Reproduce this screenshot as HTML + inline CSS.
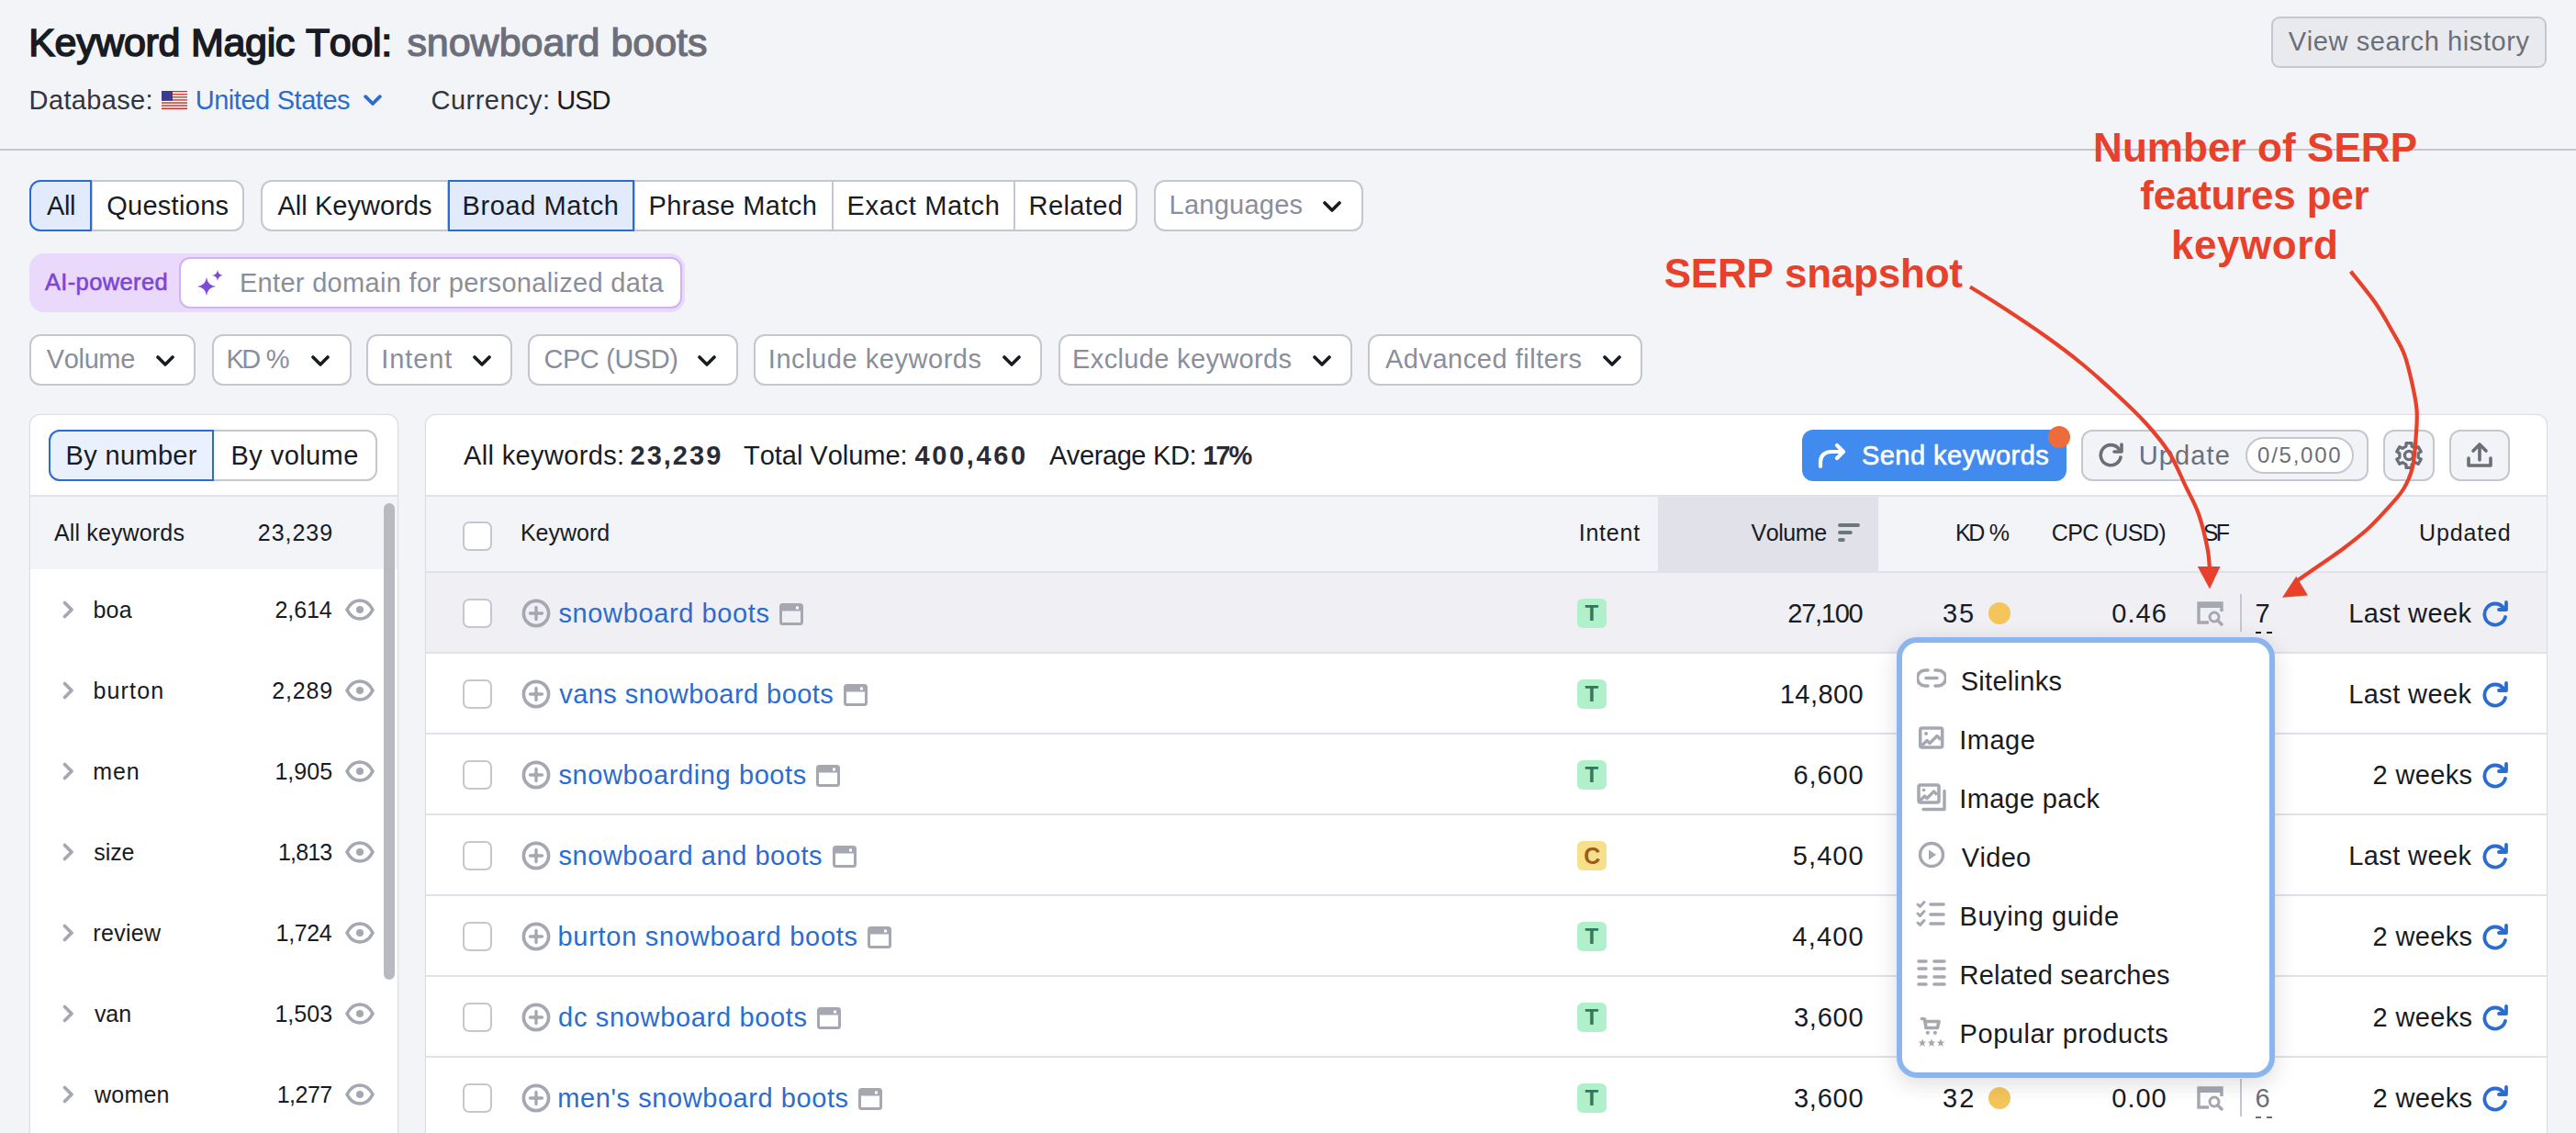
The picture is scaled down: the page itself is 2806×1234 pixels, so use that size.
<!DOCTYPE html><html><head><meta charset="utf-8"><style>
html,body{margin:0;padding:0;width:2806px;height:1234px;overflow:hidden;background:#f3f4f8;}
.t{position:absolute;white-space:pre;font-family:"Liberation Sans",sans-serif;font-kerning:none;font-variant-ligatures:none;}
.b{position:absolute;box-sizing:border-box;}
</style></head><body>
<div class="t" style="left:31.27px;top:22px;font-size:43px;line-height:48px;color:#191b23;letter-spacing:-0.352px;word-spacing:0.352px;-webkit-text-stroke:1.6px #191b23;">Keyword Magic Tool:</div>
<div class="t" style="left:443.40px;top:22px;font-size:43px;line-height:48px;color:#6c6e79;letter-spacing:-0.034px;word-spacing:0.034px;-webkit-text-stroke:1.2px #6c6e79;">snowboard boots</div>
<div class="t" style="left:31.62px;top:93px;font-size:29px;line-height:32px;color:#33353d;letter-spacing:0.353px;">Database:</div>
<svg class="b" style="left:176px;top:99px;" width="28" height="20" viewBox="0 0 28 20"><rect x="0" y="0.000" width="28" height="1.558" fill="#d22f27"/><rect x="0" y="1.538" width="28" height="1.558" fill="#fff"/><rect x="0" y="3.077" width="28" height="1.558" fill="#d22f27"/><rect x="0" y="4.615" width="28" height="1.558" fill="#fff"/><rect x="0" y="6.154" width="28" height="1.558" fill="#d22f27"/><rect x="0" y="7.692" width="28" height="1.558" fill="#fff"/><rect x="0" y="9.231" width="28" height="1.558" fill="#d22f27"/><rect x="0" y="10.769" width="28" height="1.558" fill="#fff"/><rect x="0" y="12.308" width="28" height="1.558" fill="#d22f27"/><rect x="0" y="13.846" width="28" height="1.558" fill="#fff"/><rect x="0" y="15.385" width="28" height="1.558" fill="#d22f27"/><rect x="0" y="16.923" width="28" height="1.558" fill="#fff"/><rect x="0" y="18.462" width="28" height="1.558" fill="#d22f27"/><rect x="0" y="0" width="12" height="10.77" fill="#3c3b8f"/></svg>
<div class="t" style="left:212.76px;top:93px;font-size:29px;line-height:32px;color:#2b6cd0;letter-spacing:-0.483px;word-spacing:0.483px;">United States</div>
<svg class="b" style="left:396px;top:103px;" width="20" height="14" viewBox="0 0 20 14"><path d="M2.2 2.2 L10 10 L17.8 2.2" fill="none" stroke="#2b6cd0" stroke-width="3.8" stroke-linecap="round" stroke-linejoin="round"/></svg>
<div class="t" style="left:469.53px;top:93px;font-size:29px;line-height:32px;color:#33353d;letter-spacing:0.490px;">Currency:</div>
<div class="t" style="left:606.26px;top:93px;font-size:29px;line-height:32px;color:#191b23;letter-spacing:-1.052px;">USD</div>
<div class="b" style="left:2474px;top:18px;width:300px;height:56px;background:#e9eaee;border:2px solid #c4c7cf;border-radius:9px;"></div>
<div class="t" style="left:2492.87px;top:29px;font-size:29px;line-height:32px;color:#6c6e79;letter-spacing:0.598px;">View search history</div>
<div class="b" style="left:0px;top:162px;width:2806px;height:2px;background:#c4c7cf;"></div>
<div class="b" style="left:32px;top:196px;width:234px;height:56px;background:#fff;border:2px solid #c4c7cf;border-radius:12px;"></div>
<div class="b" style="left:99px;top:196px;width:2px;height:56px;background:#c4c7cf;"></div>
<div class="b" style="left:32px;top:196px;width:68px;height:56px;background:#e1ebfb;border:2px solid #2b6cd0;border-radius:12px 0 0 12px;"></div>
<div class="t" style="left:50.94px;top:208px;font-size:29px;line-height:32px;color:#191b23;letter-spacing:-0.366px;">All</div>
<div class="t" style="left:116.13px;top:208px;font-size:29px;line-height:32px;color:#191b23;letter-spacing:0.294px;">Questions</div>
<div class="b" style="left:284px;top:196px;width:955px;height:56px;background:#fff;border:2px solid #c4c7cf;border-radius:12px;"></div>
<div class="b" style="left:487px;top:196px;width:2px;height:56px;background:#c4c7cf;"></div>
<div class="b" style="left:690px;top:196px;width:2px;height:56px;background:#c4c7cf;"></div>
<div class="b" style="left:906px;top:196px;width:2px;height:56px;background:#c4c7cf;"></div>
<div class="b" style="left:1104px;top:196px;width:2px;height:56px;background:#c4c7cf;"></div>
<div class="b" style="left:488px;top:196px;width:203px;height:56px;background:#e1ebfb;border:2px solid #2b6cd0;border-radius:0 0 0 0;"></div>
<div class="t" style="left:302.44px;top:208px;font-size:29px;line-height:32px;color:#191b23;letter-spacing:0.045px;">All Keywords</div>
<div class="t" style="left:503.62px;top:208px;font-size:29px;line-height:32px;color:#191b23;letter-spacing:0.585px;">Broad Match</div>
<div class="t" style="left:706.62px;top:208px;font-size:29px;line-height:32px;color:#191b23;letter-spacing:0.395px;">Phrase Match</div>
<div class="t" style="left:922.62px;top:208px;font-size:29px;line-height:32px;color:#191b23;letter-spacing:0.671px;">Exact Match</div>
<div class="t" style="left:1120.62px;top:208px;font-size:29px;line-height:32px;color:#191b23;letter-spacing:0.382px;">Related</div>
<div class="b" style="left:1257px;top:196px;width:228px;height:56px;background:#fff;border:2px solid #c4c7cf;border-radius:12px;"></div>
<div class="t" style="left:1273.62px;top:207px;font-size:29px;line-height:32px;color:#8a8e9b;letter-spacing:0.237px;">Languages</div>
<svg class="b" style="left:1441px;top:219px;" width="20" height="13" viewBox="0 0 20 13"><path d="M2 2 L10.0 10 L18 2" fill="none" stroke="#191b23" stroke-width="3.6" stroke-linecap="round" stroke-linejoin="round"/></svg>
<div class="b" style="left:32px;top:276px;width:714px;height:64px;background:#ead9fb;border-radius:16px;"></div>
<div class="b" style="left:195px;top:280px;width:548px;height:56px;background:#fff;border:2px solid #d0b2f6;border-radius:12px;"></div>
<div class="t" style="left:48.95px;top:293px;font-size:25.5px;line-height:28px;color:#7c46d4;letter-spacing:0.366px;-webkit-text-stroke:0.6px #7c46d4;">AI-powered</div>
<svg class="b" style="left:210px;top:290px;" width="36" height="36" viewBox="0 0 36 36"><path d="M15 11.8 Q16.0 21.0 25.2 22 Q16.0 23.0 15 32.2 Q14.0 23.0 4.800000000000001 22 Q14.0 21.0 15 11.8 Z" fill="#7c4cd8"/><path d="M27 4.1 Q27.6 9.4 32.9 10 Q27.6 10.6 27 15.9 Q26.4 10.6 21.1 10 Q26.4 9.4 27 4.1 Z" fill="#7c4cd8"/></svg>
<div class="t" style="left:260.92px;top:292px;font-size:29px;line-height:32px;color:#8a8e9b;letter-spacing:0.315px;">Enter domain for personalized data</div>
<div class="b" style="left:32px;top:364px;width:181px;height:56px;background:#fff;border:2px solid #c4c7cf;border-radius:12px;"></div>
<div class="t" style="left:50.87px;top:375px;font-size:29px;line-height:32px;color:#8a8e9b;letter-spacing:-0.382px;">Volume</div>
<svg class="b" style="left:170px;top:387px;" width="20" height="13" viewBox="0 0 20 13"><path d="M2 2 L10.0 10 L18 2" fill="none" stroke="#191b23" stroke-width="3.6" stroke-linecap="round" stroke-linejoin="round"/></svg>
<div class="b" style="left:231px;top:364px;width:152px;height:56px;background:#fff;border:2px solid #c4c7cf;border-radius:12px;"></div>
<div class="t" style="left:246.62px;top:375px;font-size:29px;line-height:32px;color:#8a8e9b;letter-spacing:-2.608px;word-spacing:2.608px;">KD %</div>
<svg class="b" style="left:339px;top:387px;" width="20" height="13" viewBox="0 0 20 13"><path d="M2 2 L10.0 10 L18 2" fill="none" stroke="#191b23" stroke-width="3.6" stroke-linecap="round" stroke-linejoin="round"/></svg>
<div class="b" style="left:399px;top:364px;width:159px;height:56px;background:#fff;border:2px solid #c4c7cf;border-radius:12px;"></div>
<div class="t" style="left:415.32px;top:375px;font-size:29px;line-height:32px;color:#8a8e9b;letter-spacing:0.866px;">Intent</div>
<svg class="b" style="left:515px;top:387px;" width="20" height="13" viewBox="0 0 20 13"><path d="M2 2 L10.0 10 L18 2" fill="none" stroke="#191b23" stroke-width="3.6" stroke-linecap="round" stroke-linejoin="round"/></svg>
<div class="b" style="left:575px;top:364px;width:229px;height:56px;background:#fff;border:2px solid #c4c7cf;border-radius:12px;"></div>
<div class="t" style="left:592.53px;top:375px;font-size:29px;line-height:32px;color:#8a8e9b;letter-spacing:-0.508px;word-spacing:0.508px;">CPC (USD)</div>
<svg class="b" style="left:760px;top:387px;" width="20" height="13" viewBox="0 0 20 13"><path d="M2 2 L10.0 10 L18 2" fill="none" stroke="#191b23" stroke-width="3.6" stroke-linecap="round" stroke-linejoin="round"/></svg>
<div class="b" style="left:821px;top:364px;width:314px;height:56px;background:#fff;border:2px solid #c4c7cf;border-radius:12px;"></div>
<div class="t" style="left:836.82px;top:375px;font-size:29px;line-height:32px;color:#8a8e9b;letter-spacing:0.545px;">Include keywords</div>
<svg class="b" style="left:1092px;top:387px;" width="20" height="13" viewBox="0 0 20 13"><path d="M2 2 L10.0 10 L18 2" fill="none" stroke="#191b23" stroke-width="3.6" stroke-linecap="round" stroke-linejoin="round"/></svg>
<div class="b" style="left:1153px;top:364px;width:320px;height:56px;background:#fff;border:2px solid #c4c7cf;border-radius:12px;"></div>
<div class="t" style="left:1168.12px;top:375px;font-size:29px;line-height:32px;color:#8a8e9b;letter-spacing:0.348px;">Exclude keywords</div>
<svg class="b" style="left:1430px;top:387px;" width="20" height="13" viewBox="0 0 20 13"><path d="M2 2 L10.0 10 L18 2" fill="none" stroke="#191b23" stroke-width="3.6" stroke-linecap="round" stroke-linejoin="round"/></svg>
<div class="b" style="left:1490px;top:364px;width:299px;height:56px;background:#fff;border:2px solid #c4c7cf;border-radius:12px;"></div>
<div class="t" style="left:1508.94px;top:375px;font-size:29px;line-height:32px;color:#8a8e9b;letter-spacing:0.518px;">Advanced filters</div>
<svg class="b" style="left:1746px;top:387px;" width="20" height="13" viewBox="0 0 20 13"><path d="M2 2 L10.0 10 L18 2" fill="none" stroke="#191b23" stroke-width="3.6" stroke-linecap="round" stroke-linejoin="round"/></svg>
<div class="b" style="left:32px;top:451px;width:401.5px;height:849px;background:#fff;border:1px solid #dcdde4;border-radius:12px;box-shadow:0 0 1px rgba(25,27,35,0.12);"></div>
<div class="b" style="left:53px;top:468px;width:358px;height:56px;background:#fff;border:2px solid #c4c7cf;border-radius:12px;"></div>
<div class="b" style="left:53px;top:468px;width:180px;height:56px;background:#e8f1fd;border:2px solid #2b6cd0;border-radius:12px 0 0 12px;"></div>
<div class="t" style="left:71.62px;top:480px;font-size:29px;line-height:32px;color:#191b23;letter-spacing:0.329px;">By number</div>
<div class="t" style="left:251.62px;top:480px;font-size:29px;line-height:32px;color:#191b23;letter-spacing:0.410px;">By volume</div>
<div class="b" style="left:33px;top:539px;width:399.5px;height:2px;background:#e0e1e9;"></div>
<div class="b" style="left:33px;top:541px;width:399.5px;height:79px;background:#f3f4f8;"></div>
<div class="t" style="left:58.95px;top:566px;font-size:25px;line-height:28px;color:#191b23;letter-spacing:0.148px;">All keywords</div>
<div class="t" style="left:280.74px;top:566px;font-size:25px;line-height:28px;color:#191b23;letter-spacing:0.995px;">23,239</div>
<div class="b" style="left:418px;top:548px;width:12px;height:519px;background:#b9babf;border-radius:6px;"></div>
<svg class="b" style="left:67px;top:653px;" width="16" height="22" viewBox="0 0 16 22"><path d="M3.5 3.5 L11 11 L3.5 18.5" fill="none" stroke="#a6a8b1" stroke-width="3.8" stroke-linecap="round" stroke-linejoin="round"/></svg>
<div class="t" style="left:101.39px;top:649.5px;font-size:25px;line-height:28px;color:#191b23;letter-spacing:0.325px;">boa</div>
<div class="t" style="left:299.49px;top:649.5px;font-size:25px;line-height:28px;color:#191b23;letter-spacing:-0.080px;">2,614</div>
<svg class="b" style="left:376px;top:652px;" width="32" height="24" viewBox="0 0 32 24"><path d="M2 12 C6 4 11 2 16 2 C21 2 26 4 30 12 C26 20 21 22 16 22 C11 22 6 20 2 12 Z" fill="none" stroke="#a6a8b1" stroke-width="3.6"/><circle cx="16" cy="12" r="4" fill="#a6a8b1"/></svg>
<svg class="b" style="left:67px;top:741px;" width="16" height="22" viewBox="0 0 16 22"><path d="M3.5 3.5 L11 11 L3.5 18.5" fill="none" stroke="#a6a8b1" stroke-width="3.8" stroke-linecap="round" stroke-linejoin="round"/></svg>
<div class="t" style="left:101.39px;top:737.5px;font-size:25px;line-height:28px;color:#191b23;letter-spacing:1.170px;">burton</div>
<div class="t" style="left:296.24px;top:737.5px;font-size:25px;line-height:28px;color:#191b23;letter-spacing:0.845px;">2,289</div>
<svg class="b" style="left:376px;top:740px;" width="32" height="24" viewBox="0 0 32 24"><path d="M2 12 C6 4 11 2 16 2 C21 2 26 4 30 12 C26 20 21 22 16 22 C11 22 6 20 2 12 Z" fill="none" stroke="#a6a8b1" stroke-width="3.6"/><circle cx="16" cy="12" r="4" fill="#a6a8b1"/></svg>
<svg class="b" style="left:67px;top:829px;" width="16" height="22" viewBox="0 0 16 22"><path d="M3.5 3.5 L11 11 L3.5 18.5" fill="none" stroke="#a6a8b1" stroke-width="3.8" stroke-linecap="round" stroke-linejoin="round"/></svg>
<div class="t" style="left:101.34px;top:825.5px;font-size:25px;line-height:28px;color:#191b23;letter-spacing:0.825px;">men</div>
<div class="t" style="left:299.40px;top:825.5px;font-size:25px;line-height:28px;color:#191b23;letter-spacing:0.023px;">1,905</div>
<svg class="b" style="left:376px;top:828px;" width="32" height="24" viewBox="0 0 32 24"><path d="M2 12 C6 4 11 2 16 2 C21 2 26 4 30 12 C26 20 21 22 16 22 C11 22 6 20 2 12 Z" fill="none" stroke="#a6a8b1" stroke-width="3.6"/><circle cx="16" cy="12" r="4" fill="#a6a8b1"/></svg>
<svg class="b" style="left:67px;top:917px;" width="16" height="22" viewBox="0 0 16 22"><path d="M3.5 3.5 L11 11 L3.5 18.5" fill="none" stroke="#a6a8b1" stroke-width="3.8" stroke-linecap="round" stroke-linejoin="round"/></svg>
<div class="t" style="left:102.30px;top:913.5px;font-size:25px;line-height:28px;color:#191b23;letter-spacing:-0.084px;">size</div>
<div class="t" style="left:303.10px;top:913.5px;font-size:25px;line-height:28px;color:#191b23;letter-spacing:-0.890px;">1,813</div>
<svg class="b" style="left:376px;top:916px;" width="32" height="24" viewBox="0 0 32 24"><path d="M2 12 C6 4 11 2 16 2 C21 2 26 4 30 12 C26 20 21 22 16 22 C11 22 6 20 2 12 Z" fill="none" stroke="#a6a8b1" stroke-width="3.6"/><circle cx="16" cy="12" r="4" fill="#a6a8b1"/></svg>
<svg class="b" style="left:67px;top:1005px;" width="16" height="22" viewBox="0 0 16 22"><path d="M3.5 3.5 L11 11 L3.5 18.5" fill="none" stroke="#a6a8b1" stroke-width="3.8" stroke-linecap="round" stroke-linejoin="round"/></svg>
<div class="t" style="left:101.34px;top:1001.5px;font-size:25px;line-height:28px;color:#191b23;letter-spacing:0.312px;">review</div>
<div class="t" style="left:300.60px;top:1001.5px;font-size:25px;line-height:28px;color:#191b23;letter-spacing:-0.356px;">1,724</div>
<svg class="b" style="left:376px;top:1004px;" width="32" height="24" viewBox="0 0 32 24"><path d="M2 12 C6 4 11 2 16 2 C21 2 26 4 30 12 C26 20 21 22 16 22 C11 22 6 20 2 12 Z" fill="none" stroke="#a6a8b1" stroke-width="3.6"/><circle cx="16" cy="12" r="4" fill="#a6a8b1"/></svg>
<svg class="b" style="left:67px;top:1093px;" width="16" height="22" viewBox="0 0 16 22"><path d="M3.5 3.5 L11 11 L3.5 18.5" fill="none" stroke="#a6a8b1" stroke-width="3.8" stroke-linecap="round" stroke-linejoin="round"/></svg>
<div class="t" style="left:102.91px;top:1089.5px;font-size:25px;line-height:28px;color:#191b23;letter-spacing:-0.049px;">van</div>
<div class="t" style="left:299.40px;top:1089.5px;font-size:25px;line-height:28px;color:#191b23;letter-spacing:0.035px;">1,503</div>
<svg class="b" style="left:376px;top:1092px;" width="32" height="24" viewBox="0 0 32 24"><path d="M2 12 C6 4 11 2 16 2 C21 2 26 4 30 12 C26 20 21 22 16 22 C11 22 6 20 2 12 Z" fill="none" stroke="#a6a8b1" stroke-width="3.6"/><circle cx="16" cy="12" r="4" fill="#a6a8b1"/></svg>
<svg class="b" style="left:67px;top:1181px;" width="16" height="22" viewBox="0 0 16 22"><path d="M3.5 3.5 L11 11 L3.5 18.5" fill="none" stroke="#a6a8b1" stroke-width="3.8" stroke-linecap="round" stroke-linejoin="round"/></svg>
<div class="t" style="left:103.04px;top:1177.5px;font-size:25px;line-height:28px;color:#191b23;letter-spacing:0.224px;">women</div>
<div class="t" style="left:301.70px;top:1177.5px;font-size:25px;line-height:28px;color:#191b23;letter-spacing:-0.500px;">1,277</div>
<svg class="b" style="left:376px;top:1180px;" width="32" height="24" viewBox="0 0 32 24"><path d="M2 12 C6 4 11 2 16 2 C21 2 26 4 30 12 C26 20 21 22 16 22 C11 22 6 20 2 12 Z" fill="none" stroke="#a6a8b1" stroke-width="3.6"/><circle cx="16" cy="12" r="4" fill="#a6a8b1"/></svg>
<div class="b" style="left:463px;top:451px;width:2312px;height:849px;background:#fff;border:1px solid #dcdde4;border-radius:12px;box-shadow:0 0 1px rgba(25,27,35,0.12);"></div>
<div class="t" style="left:504.94px;top:480px;font-size:29px;line-height:32px;color:#191b23;letter-spacing:0.365px;">All keywords:</div>
<div class="t" style="left:686.49px;top:480px;font-size:29px;line-height:32px;color:#2a2c35;font-weight:bold;letter-spacing:2.016px;">23,239</div>
<div class="t" style="left:809.95px;top:480px;font-size:29px;line-height:32px;color:#191b23;letter-spacing:-0.019px;word-spacing:0.019px;">Total Volume:</div>
<div class="t" style="left:996.56px;top:480px;font-size:29px;line-height:32px;color:#2a2c35;font-weight:bold;letter-spacing:2.633px;">400,460</div>
<div class="t" style="left:1142.94px;top:480px;font-size:29px;line-height:32px;color:#191b23;letter-spacing:-0.412px;word-spacing:0.412px;">Average KD:</div>
<div class="t" style="left:1310.17px;top:480px;font-size:29px;line-height:32px;color:#2a2c35;font-weight:bold;letter-spacing:-1.976px;">17%</div>
<div class="b" style="left:1963px;top:468px;width:288px;height:56px;background:#418bef;border-radius:12px;"></div>
<svg class="b" style="left:1979px;top:481px;" width="34" height="30" viewBox="0 0 34 30"><path d="M4 27 L4 22 C4 15 9 11 16 11 L29 11 M22 4 L29 11 L22 18" fill="none" stroke="#fff" stroke-width="4.2" stroke-linecap="round" stroke-linejoin="round"/></svg>
<div class="t" style="left:2027.98px;top:479.5px;font-size:29px;line-height:32px;color:#fff;letter-spacing:0.458px;-webkit-text-stroke:0.6px #fff;">Send keywords</div>
<div class="b" style="left:2231px;top:464px;width:24px;height:24px;border-radius:50%;background:#ec6c3c;"></div>
<div class="b" style="left:2267px;top:468px;width:313px;height:56px;background:#f2f3f6;border:2px solid #c4c7cf;border-radius:12px;"></div>
<svg class="b" style="left:2284px;top:481px;" width="30" height="30" viewBox="0 0 30 30"><path d="M24 8 A11 11 0 1 0 26 17" fill="none" stroke="#6c6e79" stroke-width="3.6" stroke-linecap="round"/><path d="M27 3 L27 11 L19 11" fill="none" stroke="#6c6e79" stroke-width="3.6" stroke-linecap="round" stroke-linejoin="round"/></svg>
<div class="t" style="left:2329.76px;top:479.5px;font-size:29px;line-height:32px;color:#6c6e79;letter-spacing:1.102px;">Update</div>
<div class="b" style="left:2446px;top:476px;width:118px;height:40px;background:#fff;border:2px solid #c4c7cf;border-radius:20px;"></div>
<div class="t" style="left:2459.06px;top:482px;font-size:24px;line-height:27px;color:#6c6e79;letter-spacing:1.758px;">0/5,000</div>
<div class="b" style="left:2596px;top:468px;width:56px;height:56px;background:#f2f3f6;border:2px solid #c4c7cf;border-radius:12px;"></div>
<svg class="b" style="left:2608px;top:480px;" width="32" height="32" viewBox="0 0 32 32"><path transform="rotate(-90 16 16)" d="M25.92 12.89 L29.47 12.99 L29.47 19.01 L25.92 19.11 L23.66 23.04 L25.34 26.16 L20.13 29.17 L18.27 26.15 L13.73 26.15 L11.87 29.17 L6.66 26.16 L8.34 23.04 L6.08 19.11 L2.53 19.01 L2.53 12.99 L6.08 12.89 L8.34 8.96 L6.66 5.84 L11.87 2.83 L13.73 5.85 L18.27 5.85 L20.13 2.83 L25.34 5.84 L23.66 8.96 Z" fill="none" stroke="#6c6e79" stroke-width="3.3" stroke-linejoin="round"/><circle cx="16" cy="16" r="4.6" fill="none" stroke="#6c6e79" stroke-width="3.3"/></svg>
<div class="b" style="left:2668px;top:468px;width:66px;height:56px;background:#f2f3f6;border:2px solid #c4c7cf;border-radius:12px;"></div>
<svg class="b" style="left:2685px;top:481px;" width="32" height="30" viewBox="0 0 32 30"><path d="M16 20 L16 4 M9 10 L16 3 L23 10 M4 18 L4 26 L28 26 L28 18" fill="none" stroke="#6c6e79" stroke-width="3.6" stroke-linecap="round" stroke-linejoin="round"/></svg>
<div class="b" style="left:464px;top:539px;width:2310px;height:2px;background:#e0e1e9;"></div>
<div class="b" style="left:464px;top:541px;width:2310px;height:82px;background:#f3f4f8;"></div>
<div class="b" style="left:1806px;top:541px;width:240px;height:82px;background:#e0e1e9;"></div>
<div class="t" style="left:566.95px;top:566px;font-size:25px;line-height:28px;color:#191b23;">Keyword</div>
<div class="t" style="left:1719.69px;top:566px;font-size:25px;line-height:28px;color:#191b23;letter-spacing:0.788px;">Intent</div>
<div class="t" style="left:1907.39px;top:566px;font-size:25px;line-height:28px;color:#191b23;letter-spacing:-0.409px;">Volume</div>
<div class="t" style="left:2129.95px;top:566px;font-size:25px;line-height:28px;color:#191b23;letter-spacing:-2.481px;word-spacing:2.481px;">KD %</div>
<div class="t" style="left:2234.73px;top:566px;font-size:25px;line-height:28px;color:#191b23;letter-spacing:-0.620px;word-spacing:0.620px;">CPC (USD)</div>
<div class="t" style="left:2399.86px;top:566px;font-size:25px;line-height:28px;color:#191b23;letter-spacing:-2.810px;">SF</div>
<div class="t" style="left:2635.07px;top:566px;font-size:25px;line-height:28px;color:#191b23;letter-spacing:0.837px;">Updated</div>
<svg class="b" style="left:2002px;top:570px;" width="26" height="22" viewBox="0 0 26 22"><g stroke="#6a787e" stroke-width="3.9" stroke-linecap="round"><path d="M2 2 L22 2"/><path d="M2 10 L13.8 10"/><path d="M2 18 L5.8 18"/></g></svg>
<div class="b" style="left:504px;top:568px;width:32px;height:32px;background:#fff;border:2px solid #c4c7cf;border-radius:7px;"></div>
<div class="b" style="left:464px;top:623px;width:2310px;height:88px;background:#efeff4;"></div>
<div class="b" style="left:464px;top:622px;width:2310px;height:2px;background:#e0e1e9;"></div>
<div class="b" style="left:504px;top:652px;width:32px;height:32px;background:#fff;border:2px solid #c4c7cf;border-radius:7px;"></div>
<svg class="b" style="left:568px;top:652px;" width="32" height="32" viewBox="0 0 32 32"><circle cx="16" cy="16" r="13.6" fill="none" stroke="#a6a8b1" stroke-width="3.6"/><path d="M16 9.5 L16 22.5 M9.5 16 L22.5 16" stroke="#a6a8b1" stroke-width="3.4" stroke-linecap="round"/></svg>
<div class="t" style="left:608.49px;top:652px;font-size:29px;line-height:32px;color:#2b6cd0;letter-spacing:0.620px;">snowboard boots</div>
<svg class="b" style="left:849px;top:657px;" width="26" height="24" viewBox="0 0 26 24"><rect x="1.5" y="1.5" width="23" height="21" rx="2" fill="none" stroke="#a6a8b1" stroke-width="3"/><rect x="1.5" y="1.5" width="23" height="7" fill="#a6a8b1"/><rect x="18" y="3.5" width="3" height="3" fill="#fff"/></svg>
<div class="b" style="left:1718px;top:652px;width:32px;height:32px;background:#b0f1cb;border-radius:6px;"></div>
<div class="t" style="left:1726.60px;top:654px;font-size:24px;line-height:27px;color:#2e7a61;font-weight:bold;">T</div>
<div class="t" style="left:1947.29px;top:652px;font-size:29px;line-height:32px;color:#191b23;letter-spacing:-1.272px;">27,100</div>
<div class="t" style="left:2558.37px;top:652px;font-size:29px;line-height:32px;color:#191b23;letter-spacing:0.377px;">Last week</div>
<svg class="b" style="left:2702px;top:653px;" width="32" height="30" viewBox="0 0 32 30"><path d="M25 9 A11.5 11.5 0 1 0 27 19" fill="none" stroke="#2b6cd0" stroke-width="3.8" stroke-linecap="round"/><path d="M28 3 L28 11 L20 11" fill="none" stroke="#2b6cd0" stroke-width="3.8" stroke-linecap="round" stroke-linejoin="round"/></svg>
<div class="t" style="left:2115.90px;top:652px;font-size:29px;line-height:32px;color:#191b23;letter-spacing:2.065px;">35</div>
<div class="b" style="left:2166px;top:656px;width:24px;height:24px;border-radius:50%;background:#f4c55a;"></div>
<div class="t" style="left:2300.37px;top:652px;font-size:29px;line-height:32px;color:#191b23;letter-spacing:0.988px;">0.46</div>
<svg class="b" style="left:2392px;top:654px;" width="32" height="28" viewBox="0 0 32 28"><path d="M14 24 L3 24 L3 3 L28 3 L28 12" fill="none" stroke="#a6a8b1" stroke-width="3.4"/><rect x="3" y="3" width="25" height="5" fill="#a6a8b1"/><circle cx="20" cy="18" r="5" fill="none" stroke="#a6a8b1" stroke-width="3"/><path d="M23.5 21.5 L28 26" stroke="#a6a8b1" stroke-width="3.4" stroke-linecap="round"/></svg>
<div class="b" style="left:2440px;top:647px;width:2px;height:41px;background:#c4c7cf;"></div>
<div class="t" style="left:2456.51px;top:652px;font-size:29px;line-height:32px;color:#191b23;">7</div>
<div class="b" style="left:2457px;top:688px;width:18px;height:0;border-top:2px dashed #191b23;"></div>
<div class="b" style="left:464px;top:710px;width:2310px;height:2px;background:#e0e1e9;"></div>
<div class="b" style="left:504px;top:740px;width:32px;height:32px;background:#fff;border:2px solid #c4c7cf;border-radius:7px;"></div>
<svg class="b" style="left:568px;top:740px;" width="32" height="32" viewBox="0 0 32 32"><circle cx="16" cy="16" r="13.6" fill="none" stroke="#a6a8b1" stroke-width="3.6"/><path d="M16 9.5 L16 22.5 M9.5 16 L22.5 16" stroke="#a6a8b1" stroke-width="3.4" stroke-linecap="round"/></svg>
<div class="t" style="left:609.20px;top:740px;font-size:29px;line-height:32px;color:#2b6cd0;letter-spacing:0.445px;">vans snowboard boots</div>
<svg class="b" style="left:919px;top:745px;" width="26" height="24" viewBox="0 0 26 24"><rect x="1.5" y="1.5" width="23" height="21" rx="2" fill="none" stroke="#a6a8b1" stroke-width="3"/><rect x="1.5" y="1.5" width="23" height="7" fill="#a6a8b1"/><rect x="18" y="3.5" width="3" height="3" fill="#fff"/></svg>
<div class="b" style="left:1718px;top:740px;width:32px;height:32px;background:#b0f1cb;border-radius:6px;"></div>
<div class="t" style="left:1726.60px;top:742px;font-size:24px;line-height:27px;color:#2e7a61;font-weight:bold;">T</div>
<div class="t" style="left:1938.79px;top:740px;font-size:29px;line-height:32px;color:#191b23;letter-spacing:0.429px;">14,800</div>
<div class="t" style="left:2558.37px;top:740px;font-size:29px;line-height:32px;color:#191b23;letter-spacing:0.377px;">Last week</div>
<svg class="b" style="left:2702px;top:741px;" width="32" height="30" viewBox="0 0 32 30"><path d="M25 9 A11.5 11.5 0 1 0 27 19" fill="none" stroke="#2b6cd0" stroke-width="3.8" stroke-linecap="round"/><path d="M28 3 L28 11 L20 11" fill="none" stroke="#2b6cd0" stroke-width="3.8" stroke-linecap="round" stroke-linejoin="round"/></svg>
<div class="b" style="left:464px;top:798px;width:2310px;height:2px;background:#e0e1e9;"></div>
<div class="b" style="left:504px;top:828px;width:32px;height:32px;background:#fff;border:2px solid #c4c7cf;border-radius:7px;"></div>
<svg class="b" style="left:568px;top:828px;" width="32" height="32" viewBox="0 0 32 32"><circle cx="16" cy="16" r="13.6" fill="none" stroke="#a6a8b1" stroke-width="3.6"/><path d="M16 9.5 L16 22.5 M9.5 16 L22.5 16" stroke="#a6a8b1" stroke-width="3.4" stroke-linecap="round"/></svg>
<div class="t" style="left:608.49px;top:828px;font-size:29px;line-height:32px;color:#2b6cd0;letter-spacing:0.599px;">snowboarding boots</div>
<svg class="b" style="left:889px;top:833px;" width="26" height="24" viewBox="0 0 26 24"><rect x="1.5" y="1.5" width="23" height="21" rx="2" fill="none" stroke="#a6a8b1" stroke-width="3"/><rect x="1.5" y="1.5" width="23" height="7" fill="#a6a8b1"/><rect x="18" y="3.5" width="3" height="3" fill="#fff"/></svg>
<div class="b" style="left:1718px;top:828px;width:32px;height:32px;background:#b0f1cb;border-radius:6px;"></div>
<div class="t" style="left:1726.60px;top:830px;font-size:24px;line-height:27px;color:#2e7a61;font-weight:bold;">T</div>
<div class="t" style="left:1953.53px;top:828px;font-size:29px;line-height:32px;color:#191b23;letter-spacing:0.884px;">6,600</div>
<div class="t" style="left:2584.54px;top:828px;font-size:29px;line-height:32px;color:#191b23;letter-spacing:0.354px;">2 weeks</div>
<svg class="b" style="left:2702px;top:829px;" width="32" height="30" viewBox="0 0 32 30"><path d="M25 9 A11.5 11.5 0 1 0 27 19" fill="none" stroke="#2b6cd0" stroke-width="3.8" stroke-linecap="round"/><path d="M28 3 L28 11 L20 11" fill="none" stroke="#2b6cd0" stroke-width="3.8" stroke-linecap="round" stroke-linejoin="round"/></svg>
<div class="b" style="left:464px;top:886px;width:2310px;height:2px;background:#e0e1e9;"></div>
<div class="b" style="left:504px;top:916px;width:32px;height:32px;background:#fff;border:2px solid #c4c7cf;border-radius:7px;"></div>
<svg class="b" style="left:568px;top:916px;" width="32" height="32" viewBox="0 0 32 32"><circle cx="16" cy="16" r="13.6" fill="none" stroke="#a6a8b1" stroke-width="3.6"/><path d="M16 9.5 L16 22.5 M9.5 16 L22.5 16" stroke="#a6a8b1" stroke-width="3.4" stroke-linecap="round"/></svg>
<div class="t" style="left:608.49px;top:916px;font-size:29px;line-height:32px;color:#2b6cd0;letter-spacing:0.541px;">snowboard and boots</div>
<svg class="b" style="left:907px;top:921px;" width="26" height="24" viewBox="0 0 26 24"><rect x="1.5" y="1.5" width="23" height="21" rx="2" fill="none" stroke="#a6a8b1" stroke-width="3"/><rect x="1.5" y="1.5" width="23" height="7" fill="#a6a8b1"/><rect x="18" y="3.5" width="3" height="3" fill="#fff"/></svg>
<div class="b" style="left:1718px;top:916px;width:32px;height:32px;background:#f6e08c;border-radius:6px;"></div>
<div class="t" style="left:1725.17px;top:917.5px;font-size:25px;line-height:28px;color:#a05a1c;font-weight:bold;">C</div>
<div class="t" style="left:1952.84px;top:916px;font-size:29px;line-height:32px;color:#191b23;letter-spacing:1.056px;">5,400</div>
<div class="t" style="left:2558.37px;top:916px;font-size:29px;line-height:32px;color:#191b23;letter-spacing:0.377px;">Last week</div>
<svg class="b" style="left:2702px;top:917px;" width="32" height="30" viewBox="0 0 32 30"><path d="M25 9 A11.5 11.5 0 1 0 27 19" fill="none" stroke="#2b6cd0" stroke-width="3.8" stroke-linecap="round"/><path d="M28 3 L28 11 L20 11" fill="none" stroke="#2b6cd0" stroke-width="3.8" stroke-linecap="round" stroke-linejoin="round"/></svg>
<div class="b" style="left:464px;top:974px;width:2310px;height:2px;background:#e0e1e9;"></div>
<div class="b" style="left:504px;top:1004px;width:32px;height:32px;background:#fff;border:2px solid #c4c7cf;border-radius:7px;"></div>
<svg class="b" style="left:568px;top:1004px;" width="32" height="32" viewBox="0 0 32 32"><circle cx="16" cy="16" r="13.6" fill="none" stroke="#a6a8b1" stroke-width="3.6"/><path d="M16 9.5 L16 22.5 M9.5 16 L22.5 16" stroke="#a6a8b1" stroke-width="3.4" stroke-linecap="round"/></svg>
<div class="t" style="left:607.43px;top:1004px;font-size:29px;line-height:32px;color:#2b6cd0;letter-spacing:0.736px;">burton snowboard boots</div>
<svg class="b" style="left:945px;top:1009px;" width="26" height="24" viewBox="0 0 26 24"><rect x="1.5" y="1.5" width="23" height="21" rx="2" fill="none" stroke="#a6a8b1" stroke-width="3"/><rect x="1.5" y="1.5" width="23" height="7" fill="#a6a8b1"/><rect x="18" y="3.5" width="3" height="3" fill="#fff"/></svg>
<div class="b" style="left:1718px;top:1004px;width:32px;height:32px;background:#b0f1cb;border-radius:6px;"></div>
<div class="t" style="left:1726.60px;top:1006px;font-size:24px;line-height:27px;color:#2e7a61;font-weight:bold;">T</div>
<div class="t" style="left:1952.33px;top:1004px;font-size:29px;line-height:32px;color:#191b23;letter-spacing:1.182px;">4,400</div>
<div class="t" style="left:2584.54px;top:1004px;font-size:29px;line-height:32px;color:#191b23;letter-spacing:0.354px;">2 weeks</div>
<svg class="b" style="left:2702px;top:1005px;" width="32" height="30" viewBox="0 0 32 30"><path d="M25 9 A11.5 11.5 0 1 0 27 19" fill="none" stroke="#2b6cd0" stroke-width="3.8" stroke-linecap="round"/><path d="M28 3 L28 11 L20 11" fill="none" stroke="#2b6cd0" stroke-width="3.8" stroke-linecap="round" stroke-linejoin="round"/></svg>
<div class="b" style="left:464px;top:1062px;width:2310px;height:2px;background:#e0e1e9;"></div>
<div class="b" style="left:504px;top:1092px;width:32px;height:32px;background:#fff;border:2px solid #c4c7cf;border-radius:7px;"></div>
<svg class="b" style="left:568px;top:1092px;" width="32" height="32" viewBox="0 0 32 32"><circle cx="16" cy="16" r="13.6" fill="none" stroke="#a6a8b1" stroke-width="3.6"/><path d="M16 9.5 L16 22.5 M9.5 16 L22.5 16" stroke="#a6a8b1" stroke-width="3.4" stroke-linecap="round"/></svg>
<div class="t" style="left:608.08px;top:1092px;font-size:29px;line-height:32px;color:#2b6cd0;letter-spacing:0.671px;">dc snowboard boots</div>
<svg class="b" style="left:890px;top:1097px;" width="26" height="24" viewBox="0 0 26 24"><rect x="1.5" y="1.5" width="23" height="21" rx="2" fill="none" stroke="#a6a8b1" stroke-width="3"/><rect x="1.5" y="1.5" width="23" height="7" fill="#a6a8b1"/><rect x="18" y="3.5" width="3" height="3" fill="#fff"/></svg>
<div class="b" style="left:1718px;top:1092px;width:32px;height:32px;background:#b0f1cb;border-radius:6px;"></div>
<div class="t" style="left:1726.60px;top:1094px;font-size:24px;line-height:27px;color:#2e7a61;font-weight:bold;">T</div>
<div class="t" style="left:1953.90px;top:1092px;font-size:29px;line-height:32px;color:#191b23;letter-spacing:0.792px;">3,600</div>
<div class="t" style="left:2584.54px;top:1092px;font-size:29px;line-height:32px;color:#191b23;letter-spacing:0.354px;">2 weeks</div>
<svg class="b" style="left:2702px;top:1093px;" width="32" height="30" viewBox="0 0 32 30"><path d="M25 9 A11.5 11.5 0 1 0 27 19" fill="none" stroke="#2b6cd0" stroke-width="3.8" stroke-linecap="round"/><path d="M28 3 L28 11 L20 11" fill="none" stroke="#2b6cd0" stroke-width="3.8" stroke-linecap="round" stroke-linejoin="round"/></svg>
<div class="b" style="left:464px;top:1150px;width:2310px;height:2px;background:#e0e1e9;"></div>
<div class="b" style="left:504px;top:1180px;width:32px;height:32px;background:#fff;border:2px solid #c4c7cf;border-radius:7px;"></div>
<svg class="b" style="left:568px;top:1180px;" width="32" height="32" viewBox="0 0 32 32"><circle cx="16" cy="16" r="13.6" fill="none" stroke="#a6a8b1" stroke-width="3.6"/><path d="M16 9.5 L16 22.5 M9.5 16 L22.5 16" stroke="#a6a8b1" stroke-width="3.4" stroke-linecap="round"/></svg>
<div class="t" style="left:607.37px;top:1180px;font-size:29px;line-height:32px;color:#2b6cd0;letter-spacing:0.565px;">men's snowboard boots</div>
<svg class="b" style="left:935px;top:1185px;" width="26" height="24" viewBox="0 0 26 24"><rect x="1.5" y="1.5" width="23" height="21" rx="2" fill="none" stroke="#a6a8b1" stroke-width="3"/><rect x="1.5" y="1.5" width="23" height="7" fill="#a6a8b1"/><rect x="18" y="3.5" width="3" height="3" fill="#fff"/></svg>
<div class="b" style="left:1718px;top:1180px;width:32px;height:32px;background:#b0f1cb;border-radius:6px;"></div>
<div class="t" style="left:1726.60px;top:1182px;font-size:24px;line-height:27px;color:#2e7a61;font-weight:bold;">T</div>
<div class="t" style="left:1953.90px;top:1180px;font-size:29px;line-height:32px;color:#191b23;letter-spacing:0.792px;">3,600</div>
<div class="t" style="left:2584.54px;top:1180px;font-size:29px;line-height:32px;color:#191b23;letter-spacing:0.354px;">2 weeks</div>
<svg class="b" style="left:2702px;top:1181px;" width="32" height="30" viewBox="0 0 32 30"><path d="M25 9 A11.5 11.5 0 1 0 27 19" fill="none" stroke="#2b6cd0" stroke-width="3.8" stroke-linecap="round"/><path d="M28 3 L28 11 L20 11" fill="none" stroke="#2b6cd0" stroke-width="3.8" stroke-linecap="round" stroke-linejoin="round"/></svg>
<div class="t" style="left:2115.90px;top:1180px;font-size:29px;line-height:32px;color:#191b23;letter-spacing:2.306px;">32</div>
<div class="b" style="left:2166px;top:1184px;width:24px;height:24px;border-radius:50%;background:#f4c55a;"></div>
<div class="t" style="left:2300.37px;top:1180px;font-size:29px;line-height:32px;color:#191b23;letter-spacing:0.941px;">0.00</div>
<svg class="b" style="left:2392px;top:1182px;" width="32" height="28" viewBox="0 0 32 28"><path d="M14 24 L3 24 L3 3 L28 3 L28 12" fill="none" stroke="#a6a8b1" stroke-width="3.4"/><rect x="3" y="3" width="25" height="5" fill="#a6a8b1"/><circle cx="20" cy="18" r="5" fill="none" stroke="#a6a8b1" stroke-width="3"/><path d="M23.5 21.5 L28 26" stroke="#a6a8b1" stroke-width="3.4" stroke-linecap="round"/></svg>
<div class="b" style="left:2440px;top:1175px;width:2px;height:41px;background:#c4c7cf;"></div>
<div class="t" style="left:2456.53px;top:1180px;font-size:29px;line-height:32px;color:#6c6e79;">6</div>
<div class="b" style="left:2457px;top:1216px;width:18px;height:0;border-top:2px dashed #6c6e79;"></div>
<div class="b" style="left:2066px;top:694px;width:412px;height:480px;background:#fff;border:6px solid #8ab5ee;border-radius:22px;box-shadow:0 6px 24px rgba(25,27,35,0.15);"></div>
<div class="t" style="left:2135.68px;top:726px;font-size:29px;line-height:32px;color:#191b23;letter-spacing:0.297px;">Sitelinks</div>
<div class="t" style="left:2134.32px;top:790px;font-size:29px;line-height:32px;color:#191b23;letter-spacing:0.466px;">Image</div>
<div class="t" style="left:2134.32px;top:854px;font-size:29px;line-height:32px;color:#191b23;letter-spacing:0.302px;">Image pack</div>
<div class="t" style="left:2136.87px;top:918px;font-size:29px;line-height:32px;color:#191b23;letter-spacing:0.294px;">Video</div>
<div class="t" style="left:2134.62px;top:982px;font-size:29px;line-height:32px;color:#191b23;letter-spacing:0.521px;">Buying guide</div>
<div class="t" style="left:2134.62px;top:1046px;font-size:29px;line-height:32px;color:#191b23;letter-spacing:0.216px;">Related searches</div>
<div class="t" style="left:2134.62px;top:1110px;font-size:29px;line-height:32px;color:#191b23;letter-spacing:0.529px;">Popular products</div>
<svg class="b" style="left:2088px;top:727px;" width="32" height="24" viewBox="0 0 32 24"><path d="M12 3 L9 3 A8.5 8.5 0 0 0 9 20 L12 20 M20 3 L23 3 A8.5 8.5 0 0 1 23 20 L20 20 M10 11.5 L22 11.5" fill="none" stroke="#a6a8b1" stroke-width="3.6" stroke-linecap="round"/></svg>
<svg class="b" style="left:2088px;top:789px;" width="32" height="28" viewBox="0 0 32 28"><rect x="3.7" y="4" width="24" height="21" rx="2" fill="none" stroke="#a6a8b1" stroke-width="3.5"/><path d="M5.5 23 L11 17.5 L14 20.5 L22 12.5 L26 16.5" fill="none" stroke="#a6a8b1" stroke-width="3.4" stroke-linejoin="round"/><circle cx="10" cy="10" r="2" fill="#a6a8b1"/></svg>
<svg class="b" style="left:2086px;top:851px;" width="36" height="34" viewBox="0 0 36 34"><rect x="4" y="4" width="22" height="19" rx="2" fill="none" stroke="#a6a8b1" stroke-width="3.5"/><path d="M5.5 21 L10.5 16 L13 18.5 L20.5 11 L24 14.5" fill="none" stroke="#a6a8b1" stroke-width="3.2" stroke-linejoin="round"/><circle cx="9.5" cy="9.5" r="1.8" fill="#a6a8b1"/><path d="M9 30.5 L32 30.5 L32 10.5" fill="none" stroke="#a6a8b1" stroke-width="3.4" stroke-linecap="round" stroke-linejoin="round"/></svg>
<svg class="b" style="left:2089px;top:916px;" width="30" height="30" viewBox="0 0 30 30"><circle cx="15" cy="15" r="12.5" fill="none" stroke="#a6a8b1" stroke-width="3.4"/><path d="M12 9.5 L20 15 L12 20.5 Z" fill="#a6a8b1"/></svg>
<svg class="b" style="left:2087px;top:980px;" width="34" height="30" viewBox="0 0 34 30"><g fill="none" stroke="#a6a8b1" stroke-width="3" stroke-linecap="round" stroke-linejoin="round"><path d="M2 5 L4.5 7.5 L9 2.5"/><path d="M2 15 L4.5 17.5 L9 12.5"/><path d="M2 25 L4.5 27.5 L9 22.5"/></g><g stroke="#a6a8b1" stroke-width="3.6" stroke-linecap="round"><path d="M16 5 L30 5"/><path d="M16 16 L30 16"/><path d="M16 26 L30 26"/></g></svg>
<svg class="b" style="left:2087px;top:1044px;" width="34" height="32" viewBox="0 0 34 32"><g stroke="#a6a8b1" stroke-width="3.6" stroke-linecap="round"><path d="M3 3 L11 3 M3 11 L11 11 M3 20 L11 20 M3 28 L11 28 M20 3 L31 3 M20 11 L31 11 M20 20 L31 20 M20 28 L31 28"/></g></svg>
<svg class="b" style="left:2089px;top:1106px;" width="30" height="36" viewBox="0 0 30 36"><path d="M4.5 3.5 L7.5 4 L9 13.5 L21.5 13.5 L23 6.5 L8.5 6.5" fill="none" stroke="#a6a8b1" stroke-width="3.6" stroke-linejoin="round" stroke-linecap="round"/><circle cx="10.8" cy="18.8" r="2.1" fill="#a6a8b1"/><circle cx="18.8" cy="18.8" r="2.1" fill="#a6a8b1"/><path transform="translate(5 30)" d="M0 -4.5 L1.3 -1.4 L4.3 -1.4 L1.9 0.6 L2.8 3.7 L0 1.9 L-2.8 3.7 L-1.9 0.6 L-4.3 -1.4 L-1.3 -1.4 Z" fill="#a6a8b1"/><path transform="translate(15 30)" d="M0 -4.5 L1.3 -1.4 L4.3 -1.4 L1.9 0.6 L2.8 3.7 L0 1.9 L-2.8 3.7 L-1.9 0.6 L-4.3 -1.4 L-1.3 -1.4 Z" fill="#a6a8b1"/><path transform="translate(25 30)" d="M0 -4.5 L1.3 -1.4 L4.3 -1.4 L1.9 0.6 L2.8 3.7 L0 1.9 L-2.8 3.7 L-1.9 0.6 L-4.3 -1.4 L-1.3 -1.4 Z" fill="#a6a8b1"/></svg>
<div class="t" style="left:1812.73px;top:272.5px;font-size:44px;line-height:49px;color:#e8412b;font-weight:bold;letter-spacing:-0.210px;word-spacing:0.210px;">SERP snapshot</div>
<div class="t" style="left:2280.06px;top:136px;font-size:44px;line-height:49px;color:#e8412b;font-weight:bold;letter-spacing:0.070px;">Number of SERP</div>
<div class="t" style="left:2331.25px;top:188px;font-size:44px;line-height:49px;color:#e8412b;font-weight:bold;letter-spacing:-0.246px;word-spacing:0.246px;">features per</div>
<div class="t" style="left:2364.93px;top:242px;font-size:44px;line-height:49px;color:#e8412b;font-weight:bold;letter-spacing:0.576px;">keyword</div>
<svg class="b" style="left:0px;top:0px;pointer-events:none;" width="2806" height="1234" viewBox="0 0 2806 1234"><path d="M2146.0 312.5 C2151.7 316.0 2166.0 324.6 2180.0 333.8 C2194.0 342.9 2215.4 357.1 2230.0 367.5 C2244.6 377.9 2254.8 385.6 2267.5 396.0 C2280.2 406.4 2294.3 419.2 2306.0 430.0 C2317.7 440.8 2328.1 450.6 2337.5 461.0 C2346.9 471.4 2355.2 481.0 2362.5 492.5 C2369.8 504.0 2375.6 518.8 2381.0 530.0 C2386.4 541.2 2391.1 548.8 2395.0 560.0 C2398.9 571.2 2402.5 587.0 2404.5 597.0 C2406.5 607.0 2406.6 616.2 2407.0 620.0" fill="none" stroke="#e8412b" stroke-width="4.2"/>
<path d="M2393.8 617 L2418.5 617 L2407 641.5 Z" fill="#e8412b"/>
<path d="M2560.6 295.6 C2565.1 301.3 2579.9 319.1 2587.5 330.0 C2595.1 340.9 2600.8 351.7 2606.0 361.0 C2611.2 370.3 2615.3 376.2 2619.0 386.0 C2622.7 395.8 2625.8 410.0 2628.0 420.0 C2630.2 430.0 2631.8 437.5 2632.5 446.0 C2633.2 454.5 2632.8 460.6 2632.0 471.0 C2631.2 481.4 2630.4 498.1 2628.0 508.5 C2625.6 518.9 2622.8 525.1 2617.5 533.5 C2612.2 541.9 2602.7 551.4 2596.0 558.8 C2589.3 566.1 2584.8 571.0 2577.5 577.5 C2570.2 584.0 2560.8 591.2 2552.5 597.5 C2544.2 603.8 2536.2 608.9 2527.5 615.0 C2518.8 621.1 2504.6 630.8 2500.0 634.0" fill="none" stroke="#e8412b" stroke-width="4.2"/>
<path d="M2486 650.8 L2501.2 627.8 L2514 648.6 Z" fill="#e8412b"/></svg>
</body></html>
